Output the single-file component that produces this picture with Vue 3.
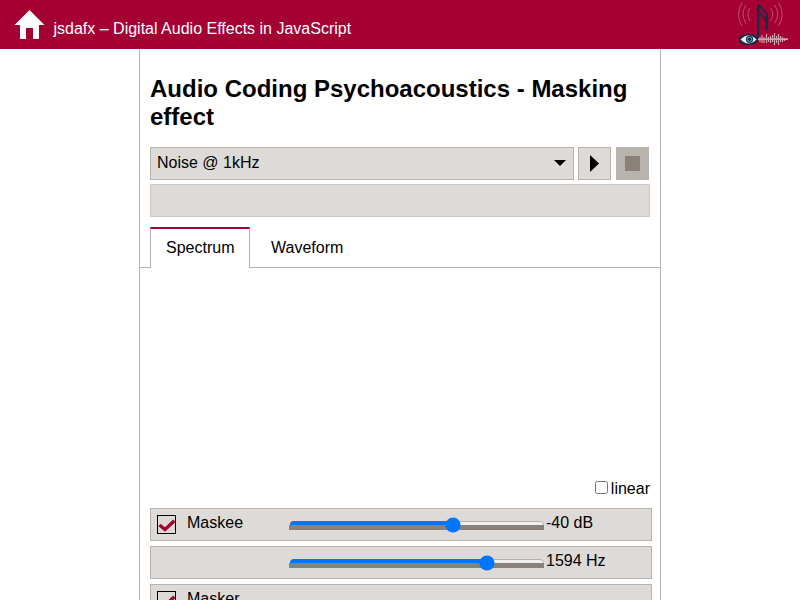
<script setup>
import { ref } from 'vue'

const rows = [
  { label: 'Maskee', check: true, value: '-40 dB', pos: 163.5 },
  { label: '', check: false, value: '1594 Hz', pos: 197.5 },
  { label: 'Masker', check: true },
]
const linear = ref(false)
</script>

<template>
  <div class="page">
    <header class="top">
      <svg class="home" width="30" height="30" viewBox="0 0 30 30">
        <path d="M14.5 0L29.5 15H24V29H18V18H11V29H5V15H-0.5Z" fill="#fff" />
      </svg>
      <span class="title">jsdafx – Digital Audio Effects in JavaScript</span>
      <svg class="logo" width="54" height="48" viewBox="0 0 54 48">
        <g fill="none" stroke="#b8506a" stroke-width="1">
          <path d="M6 2.500Q-1 14 6 26M10 5Q4 14 10 23.500M14 8Q10 14 14 21" />
          <path d="M42.500 2.500Q50 14 42.500 26M38.500 5Q45 14 38.500 23.500M34.500 8Q39 14 34.500 21" />
        </g>
        <path d="M22.200 39V4" stroke="#0d2c48" stroke-width="2.200" />
        <path d="M22.500 5L31 14V22C31 26 31 28 30 30.500M22.500 12L29 18.500C31.500 22 31 26 30 30" fill="none" stroke="#0d2c48" stroke-width="1.700" />
        <path d="M22 39.200H52" stroke="#dcb0b8" stroke-width="1.500" />
        <path d="M24 37V42M26 35V43M28 37V43M30.500 34V43M32.500 37V42M34.500 36V43M36.500 35V42M38.500 33V45M40.500 36V43M42.500 34V45M44.500 36V42M46.500 37V42M48.500 38V41" stroke="#d0a0aa" stroke-width="1.200" />
        <ellipse cx="12.500" cy="39.500" rx="9.500" ry="5.500" fill="#0d2c48" />
        <path d="M4.500 39.500Q12.500 31.500 20.500 39.500Q12.500 47.500 4.500 39.500Z" fill="#e8eef0" />
        <circle cx="13.500" cy="39.300" r="3.600" fill="#0d2c48" />
        <circle cx="13.500" cy="39.300" r="2.200" fill="none" stroke="#a8bac6" stroke-width=".8" />
      </svg>
    </header>
    <main class="content">
      <h1>Audio Coding Psychoacoustics - Masking effect</h1>
      <div class="player">
        <div class="select">
          <span>Noise @ 1kHz</span>
          <svg width="12" height="6" viewBox="0 0 12 6"><path d="M0 0H12L6 6Z" fill="#000" /></svg>
        </div>
        <button class="btn play"><svg width="9" height="17" viewBox="0 0 9 17"><path d="M0 0L9 8.500L0 17Z" fill="#000" /></svg></button>
        <button class="btn stop"><i></i></button>
      </div>
      <div class="progress"></div>
      <nav class="tabs">
        <a class="tab active">Spectrum</a>
        <a class="tab">Waveform</a>
      </nav>
      <div class="canvas"></div>
      <label class="linear"><input v-model="linear" type="checkbox"><span>linear</span></label>
      <div v-for="(r, i) in rows" :key="i" class="row">
        <div class="name">
          <span v-if="r.check" class="check">
            <svg width="17" height="17" viewBox="0 0 17 17"><path d="M1.500 9L7 13.500L16.300 4.800" fill="none" stroke="#a50034" stroke-width="3.300" /></svg>
          </span>
          <span class="label">{{ r.label }}</span>
        </div>
        <template v-if="r.value">
          <div class="slider">
            <div class="track"></div>
            <div class="fill" :style="{ width: r.pos + 'px' }"></div>
            <div class="base"></div>
            <svg class="thumb" width="16" height="16" viewBox="0 0 16 16" :style="{ left: r.pos + 'px' }"><circle cx="8" cy="8" r="7.600" fill="#0075ff" /></svg>
          </div>
          <span class="value">{{ r.value }}</span>
        </template>
      </div>
    </main>
  </div>
</template>

<style>
html, body { overflow: hidden; }
</style>
<style scoped>
.page { height: 600px; overflow: hidden; background: #fff; color: #000; font: 16px/18px "Liberation Sans", Arial, sans-serif; }
.page * { box-sizing: border-box; }
.top { height: 49px; background: #a50034; display: flex; color: #fff; }
.home { margin: 10px 0 0 15px; overflow: visible; flex: none; }
.title { margin: 20px 0 0 8.500px; }
.logo { margin-left: auto; margin-right: 10px; }
.content { width: 522px; height: 700px; margin: 0 auto; border: solid #b9b3ad; border-width: 0 1px; padding: 26px 0 0 10px; }
h1 { margin: 0 9px 16px 0; font-size: 24px; line-height: 28px; font-weight: bold; }
.player { display: flex; height: 33px; }
.select { width: 424px; height: 33px; background: #dddad7; border: 1px solid #b9b3ad; padding: 6px 7px 0 6px; display: flex; justify-content: space-between; }
.select svg { margin-top: 6px; }
.btn { width: 33px; height: 33px; padding: 0; margin: 0 0 0 4px; border: 1px solid #b9b3ad; background: #dddad7; display: flex; align-items: center; justify-content: center; }
.stop { margin-left: 5px; background: #b9b3ad; }
.stop i { width: 15px; height: 15px; background: #8b8178; }
.progress { width: 500px; height: 33px; margin-top: 4px; background: #dddad7; border: 1px solid #cac6c2; }
.tabs { display: flex; height: 41px; margin: 10px 0 0 -10px; padding-left: 10px; background: linear-gradient(#b9b3ad, #b9b3ad) left bottom / 100% 1px no-repeat; }
.tab { padding: 12px 20px 0 21px; }
.tab.active { width: 100px; padding: 10px 0 0 15px; background: #fff; border: 1px solid #b9b3ad; border-top: 2px solid #a50034; border-bottom: 0; }
.canvas { height: 210px; }
.linear { width: 500px; height: 30px; display: flex; justify-content: flex-end; padding-top: 2px; }
.linear input { width: 13px; height: 13px; margin: 1px 3px 0 0; }
.row { width: 502px; height: 33px; margin-bottom: 5px; background: #dddad7; border: 1px solid #b9b3ad; display: flex; }
.name { width: 138px; display: flex; padding-left: 6px; }
.check { width: 19px; height: 19px; margin-top: 6px; border: 1px solid #000; }
.check svg { display: block; }
.label { margin: 5px 0 0 11px; }
.slider { position: relative; width: 255px; height: 31px; }
.track, .fill, .base, .thumb { position: absolute; }
.track { left: 1px; top: 11.500px; width: 254px; height: 8px; border: 1px solid #b2b2b2; border-radius: 4px; background: #efefef; }
.fill { left: 1px; top: 11.500px; height: 8px; background: #0075ff; border-radius: 4px 0 0 4px; }
.base { left: 0; top: 16px; width: 255px; height: 5px; background: #8b8178; }
.thumb { top: 8px; margin-left: -7.500px; }
.value { margin: 5px 0 0 2px; }
</style>
